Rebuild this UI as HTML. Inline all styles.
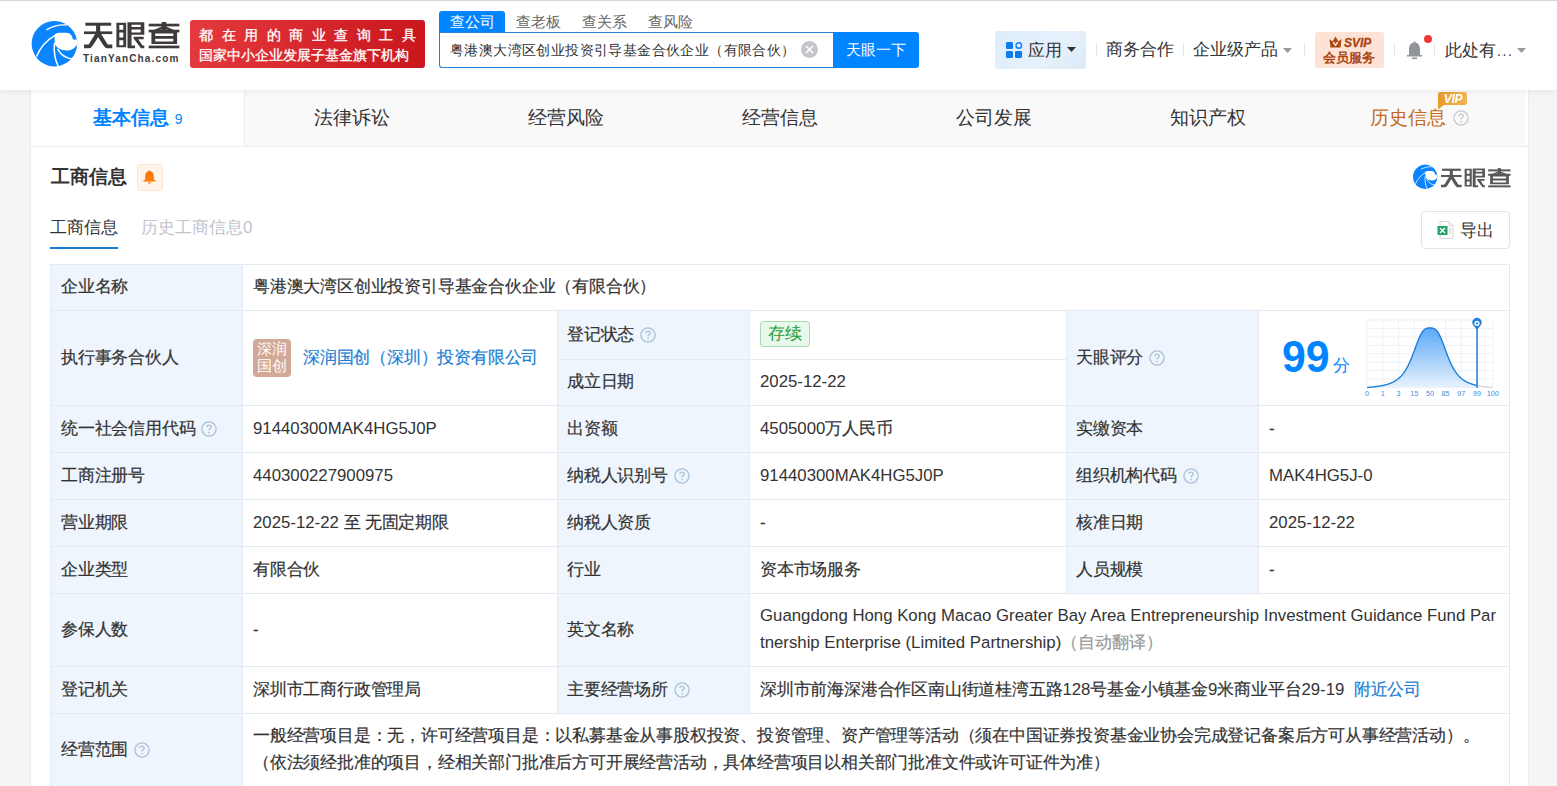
<!DOCTYPE html><html><head><meta charset="utf-8"><style>
*{margin:0;padding:0;box-sizing:border-box}
html,body{width:1557px;height:786px;overflow:hidden;background:#f5f5f5;font-family:"Liberation Sans",sans-serif;color:#333}
.abs{position:absolute;white-space:nowrap}
.hdr{position:absolute;left:0;top:0;width:1557px;height:90px;background:#fff;box-shadow:0 2px 6px rgba(0,0,0,.06);z-index:2}
.main{position:absolute;left:30px;top:90px;width:1499px;height:700px;background:#fff;border-left:1px solid #ececec;border-right:1px solid #ececec}
.tabs{position:absolute;left:0;top:0;width:1497px;height:57px;background:linear-gradient(90deg,#f9f9f9 1494px,#fff 1494px);border-bottom:1px solid #ececec}
.tab{position:absolute;top:0;height:56px;line-height:56px;text-align:center;font-size:19px;color:#333}
.cell{position:absolute;font-size:16.8px;color:#333;white-space:nowrap;letter-spacing:-0.2px;-webkit-text-stroke:0.2px currentColor}
.lt{letter-spacing:0;-webkit-text-stroke:0}
.lbl{position:absolute;background:#eef5fc}
.hl{position:absolute;height:1px;background:#e3eaf1}
.vl{position:absolute;width:1px;background:#e3eaf1}
.q{display:inline-block;width:15px;height:15px;border:1px solid #b8d0e6;border-radius:50%;font-size:11px;line-height:13px;text-align:center;color:#b8d0e6;vertical-align:middle;font-weight:normal}
</style></head><body>
<div class="hdr">
<div class="abs" style="left:0;top:0;width:1557px;height:1px;background:#d6d6d6"></div>
<svg class="abs" style="left:28px;top:18px" width="54" height="54" viewBox="0 0 54 54"><path d="M26.4 3 A22.7 22.7 0 1 1 26.39 3Z" fill="#0a84ff"/>
<path d="M26.8 16.5 C28 15.5 29.5 14.9 31 14.8 L38.5 14.8 C40.5 15 41.8 15.6 42.6 16.5 C44 17.8 44.6 19.5 44.8 21.5 L49.5 21.8 L49.5 24.2 C49 27 48.2 28.2 47.4 28.8 C45.8 30.8 44 31.6 42.6 31.9 C40.5 32.4 38.5 32.5 36.4 32.3 C34 32 32.4 31.4 30.9 30.6 C29.4 29.7 28.3 28.6 27.5 27.5 C26.6 25.5 26.4 22 26.8 16.5Z" fill="#fff"/>
<path d="M27.5 17.2 C19 22 12 30 8.6 38.5" stroke="#fff" stroke-width="1.5" fill="none"/>
<path d="M26.4 25 C25.6 34 27 42 30.5 49" stroke="#fff" stroke-width="1.5" fill="none"/>
<path d="M29.5 30.8 C33 37 38.5 40.5 45 41" stroke="#fff" stroke-width="1.5" fill="none"/>
<path d="M18.5 11.8 C24 8.5 32 6.5 39 7" stroke="#fff" stroke-width="1.4" fill="none"/></svg>
<svg class="abs" style="left:83.7px;top:22.4px;color:#3e3a3b" width="96" height="27" viewBox="0 0 96 27" fill="currentColor"><rect x="1.4" y="0.7" width="25.8" height="3"/><rect x="0" y="9.4" width="28.3" height="2.7"/><rect x="12.1" y="2" width="4.1" height="9"/>
<path d="M11.4 11.5H16.4L9 23.3Q7.3 26.3 4.5 26.3H0V22.6H3.6Q4.6 22.6 5.3 21.4Z"/>
<path d="M11.9 11.5H16.9L23 21.4Q23.7 22.6 24.7 22.6H28.3V26.3H23.8Q21 26.3 19.3 23.3Z"/>
<path d="M32.4 0.7H42.2V25.3H32.4ZM35.3 3V7.7H39.3V3ZM35.3 10.4V15.5H39.3V10.4ZM35.3 18.2V23.2H39.3V18.2Z" fill-rule="evenodd"/>
<path d="M43.5 0.3H60.3V12.8H47.5V23.6H51V26.3H43.5ZM47.5 2.7V5H56.7V2.7ZM47.5 7.4V10.4H56.7V7.4Z" fill-rule="evenodd"/>
<path d="M49.6 14.8H59.7V17.2H54.3L58.5 23.6H60.3V26.3H57L49.6 16.5Z"/>
<rect x="64.7" y="1.7" width="30.7" height="2.7"/><rect x="77.6" y="0" width="4.7" height="8.4"/>
<path d="M79.5 5.2L68.5 9.8M80.4 5.2L91.4 9.8" stroke="currentColor" stroke-width="2.4" fill="none"/>
<rect x="64.7" y="7.7" width="30.7" height="2.7"/>
<path d="M67.4 9.1H93.1V21.9H67.4ZM71.2 11.4V14.1H89.3V11.4ZM71.2 16.8V19.5H89.3V16.8Z" fill-rule="evenodd"/>
<rect x="64.7" y="23.6" width="30.7" height="2.7"/></svg>
<div class="abs" style="left:83px;top:53px;font-size:10px;line-height:12px;font-weight:bold;color:#3e3a3b;letter-spacing:1.15px">TianYanCha.com</div>
<div class="abs" style="left:190px;top:20px;width:235px;height:48px;border-radius:3px;background:linear-gradient(100deg,#e5393e,#c8161c)"></div>
<div class="abs" style="left:199px;top:25px;font-size:14px;color:#fff;letter-spacing:8.5px;line-height:20px;-webkit-text-stroke:0.3px #fff">都在用的商业查询工具</div>
<div class="abs" style="left:199px;top:44.5px;font-size:14.45px;color:#fff;line-height:20px;-webkit-text-stroke:0.3px #fff">国家中小企业发展子基金旗下机构</div>
<div class="abs" style="left:439px;top:11px;width:66px;height:22px;background:#0084ff;border-radius:3px 3px 0 0"></div>
<div class="abs" style="left:450px;top:12px;font-size:14.5px;line-height:20px;color:#fff">查公司</div>
<div class="abs" style="left:516px;top:12px;font-size:14.5px;line-height:20px;color:#666">查老板</div>
<div class="abs" style="left:582px;top:12px;font-size:14.5px;line-height:20px;color:#666">查关系</div>
<div class="abs" style="left:648px;top:12px;font-size:14.5px;line-height:20px;color:#666">查风险</div>
<div class="abs" style="left:439px;top:32px;width:395px;height:36px;border:1px solid #2a7fd8;border-right:none;border-radius:0 0 0 3px;background:#fff"></div>
<div class="abs" style="left:450px;top:40px;font-size:14px;letter-spacing:0.4px;line-height:20px;color:#333">粤港澳大湾区创业投资引导基金合伙企业（有限合伙）</div>
<div class="abs" style="left:801px;top:41px;width:17px;height:17px;border-radius:50%;background:#c4c6cc"></div>
<svg class="abs" style="left:801px;top:41px" width="17" height="17"><path d="M5 5L12 12M12 5L5 12" stroke="#fff" stroke-width="1.5"/></svg>
<div class="abs" style="left:833px;top:32px;width:86px;height:36px;background:#0084ff;border-radius:0 3px 3px 0"></div>
<div class="abs" style="left:846px;top:40px;font-size:14.7px;line-height:20px;color:#fff">天眼一下</div>
<div class="abs" style="left:995px;top:31px;width:91px;height:38px;border-radius:3px;background:linear-gradient(135deg,#deecfb,#e6f1fc 60%,#dde9f8)"></div>
<svg class="abs" style="left:1006px;top:42px" width="17" height="17" viewBox="0 0 17 17">
<rect x="0" y="0" width="7" height="7" rx="1.2" fill="#0a7cf0"/><circle cx="12.8" cy="3.5" r="2.8" fill="none" stroke="#0a7cf0" stroke-width="1.4"/>
<rect x="0" y="9" width="7" height="7" rx="1.2" fill="#0a7cf0"/><rect x="9" y="9" width="7" height="7" rx="1.2" fill="#0a7cf0"/></svg>
<div class="abs" style="left:1028px;top:40px;font-size:16.7px;line-height:22px;color:#333">应用</div>
<svg class="abs" style="left:1067px;top:47px" width="9" height="6"><path d="M0 0H9L4.5 5z" fill="#333"/></svg>
<div class="abs" style="left:1096px;top:43px;width:1px;height:14px;background:#e8e8e8"></div>
<div class="abs" style="left:1183px;top:43px;width:1px;height:14px;background:#e8e8e8"></div>
<div class="abs" style="left:1304px;top:43px;width:1px;height:14px;background:#e8e8e8"></div>
<div class="abs" style="left:1394px;top:43px;width:1px;height:14px;background:#e8e8e8"></div>
<div class="abs" style="left:1434px;top:43px;width:1px;height:14px;background:#e8e8e8"></div>
<div class="abs" style="left:1106px;top:39px;font-size:16.7px;line-height:22px;color:#333">商务合作</div>
<div class="abs" style="left:1193px;top:39px;font-size:16.7px;line-height:22px;color:#333">企业级产品</div>
<svg class="abs" style="left:1283px;top:48px" width="9" height="5"><path d="M0 0H9L4.5 5z" fill="#999"/></svg>
<div class="abs" style="left:1315px;top:32px;width:69px;height:36px;border-radius:3px;background:#fde3d5"></div>
<svg class="abs" style="left:1329px;top:36px" width="13" height="12" viewBox="0 0 13 12"><path d="M0.5 3L3.5 5.5L6.5 0.5L9.5 5.5L12.5 3L11.5 11.5H1.5Z" fill="#ac4612"/><path d="M4.2 6L6.5 9.2L8.8 6" stroke="#fde3d5" stroke-width="1.4" fill="none"/></svg>
<div class="abs" style="left:1344px;top:35.5px;font-size:12px;line-height:15px;font-weight:bold;font-style:italic;color:#ac4612;-webkit-text-stroke:0.3px #ac4612">SVIP</div>
<div class="abs" style="left:1323px;top:50px;font-size:12.8px;line-height:16px;font-weight:bold;color:#ac4612">会员服务</div>
<svg class="abs" style="left:1406px;top:41px" width="17" height="19" viewBox="0 0 17 19"><path d="M8.5 0.5C9.2 0.5 9.4 1 9.4 1.5C12.3 2.2 14 4.6 14 8V14H16V15.5H1V14H3V8C3 4.6 4.7 2.2 7.6 1.5C7.6 1 7.8 0.5 8.5 0.5Z" fill="#909399"/><rect x="6" y="16.5" width="5" height="1.6" fill="#909399"/></svg>
<div class="abs" style="left:1424px;top:35px;width:8px;height:8px;border-radius:50%;background:#f0373a"></div>
<div class="abs" style="left:1445px;top:40px;font-size:16.7px;line-height:22px;color:#333">此处有<span style="font-size:14px;letter-spacing:1.6px;margin-left:1px">...</span></div>
<svg class="abs" style="left:1517px;top:48px" width="9" height="5"><path d="M0 0H9L4.5 5z" fill="#999"/></svg>
</div>
<div class="main">
<div class="tabs"></div>
<div class="abs" style="left:0;top:0;width:214px;height:56px;background:#fff;border-right:1px solid #ececec"></div>
<div class="tab" style="left:0;width:214px;color:#0084ff;font-weight:bold">基本信息 <span style="font-size:14px;font-weight:normal">9</span></div>
<div class="tab" style="left:214px;width:214px">法律诉讼</div>
<div class="tab" style="left:428px;width:214px">经营风险</div>
<div class="tab" style="left:642px;width:214px">经营信息</div>
<div class="tab" style="left:856px;width:214px">公司发展</div>
<div class="tab" style="left:1070px;width:214px">知识产权</div>
<div class="abs" style="left:1339px;top:16px;font-size:19px;line-height:24px;color:#c4691c">历史信息</div>
<svg class="abs" style="left:1422px;top:20px" width="16" height="16" viewBox="0 0 16 16"><circle cx="8" cy="8" r="7.1" fill="none" stroke="#c6c9cf" stroke-width="1.3"/><path d="M5.9 6.1C5.9 4.9 6.8 4.1 8 4.1C9.2 4.1 10.1 4.9 10.1 6C10.1 7.3 8.3 7.5 8.1 9V9.6" fill="none" stroke="#c6c9cf" stroke-width="1.4"/><circle cx="8.1" cy="11.6" r="0.85" fill="#c6c9cf"/></svg>
<svg class="abs" style="left:1406px;top:2px" width="31" height="18" viewBox="0 0 31 18"><defs><linearGradient id="vg" x1="0" y1="0" x2="1" y2="0"><stop offset="0" stop-color="#e89a2c"/><stop offset="1" stop-color="#f0b555"/></linearGradient></defs><path d="M3 0H28Q30 0 30 2V11Q30 13 28 13H7L1 17.5V3Q1 0 3 0Z" fill="url(#vg)"/><text x="16" y="11.3" font-size="12" font-weight="bold" font-style="italic" fill="#fff" text-anchor="middle" font-family="Liberation Sans" letter-spacing="-0.3">VIP</text></svg>
</div>
<div class="abs" style="left:51px;top:164px;font-size:19px;line-height:26px;font-weight:bold;color:#333">工商信息</div>
<div class="abs" style="left:137px;top:164px;width:26px;height:27px;border:1px solid #fbe5d2;background:#fff4ea;border-radius:3px"></div>
<svg class="abs" style="left:143px;top:170px" width="13" height="14" viewBox="0 0 13 14"><path d="M6.5 0.3C7 0.3 7.2 0.7 7.2 1C9.5 1.5 10.8 3.4 10.8 6V10H12.5V11.5H0.5V10H2.2V6C2.2 3.4 3.5 1.5 5.8 1C5.8 0.7 6 0.3 6.5 0.3Z" fill="#ff7a00"/><path d="M4.8 12.3H8.2Q8 13.7 6.5 13.7Q5 13.7 4.8 12.3Z" fill="#ff7a00"/></svg>
<svg class="abs" style="left:1411px;top:163px" width="29" height="29" viewBox="0 0 54 54"><path d="M26.4 3 A22.7 22.7 0 1 1 26.39 3Z" fill="#0a84ff"/>
<path d="M26.8 16.5 C28 15.5 29.5 14.9 31 14.8 L38.5 14.8 C40.5 15 41.8 15.6 42.6 16.5 C44 17.8 44.6 19.5 44.8 21.5 L49.5 21.8 L49.5 24.2 C49 27 48.2 28.2 47.4 28.8 C45.8 30.8 44 31.6 42.6 31.9 C40.5 32.4 38.5 32.5 36.4 32.3 C34 32 32.4 31.4 30.9 30.6 C29.4 29.7 28.3 28.6 27.5 27.5 C26.6 25.5 26.4 22 26.8 16.5Z" fill="#fff"/>
<path d="M27.5 17.2 C19 22 12 30 8.6 38.5" stroke="#fff" stroke-width="1.5" fill="none"/>
<path d="M26.4 25 C25.6 34 27 42 30.5 49" stroke="#fff" stroke-width="1.5" fill="none"/>
<path d="M29.5 30.8 C33 37 38.5 40.5 45 41" stroke="#fff" stroke-width="1.5" fill="none"/>
<path d="M18.5 11.8 C24 8.5 32 6.5 39 7" stroke="#fff" stroke-width="1.4" fill="none"/></svg>
<svg class="abs" style="left:1440.7px;top:167.6px;color:#585858" width="70" height="20" viewBox="0 0 96 27" fill="currentColor"><rect x="1.4" y="0.7" width="25.8" height="3"/><rect x="0" y="9.4" width="28.3" height="2.7"/><rect x="12.1" y="2" width="4.1" height="9"/>
<path d="M11.4 11.5H16.4L9 23.3Q7.3 26.3 4.5 26.3H0V22.6H3.6Q4.6 22.6 5.3 21.4Z"/>
<path d="M11.9 11.5H16.9L23 21.4Q23.7 22.6 24.7 22.6H28.3V26.3H23.8Q21 26.3 19.3 23.3Z"/>
<path d="M32.4 0.7H42.2V25.3H32.4ZM35.3 3V7.7H39.3V3ZM35.3 10.4V15.5H39.3V10.4ZM35.3 18.2V23.2H39.3V18.2Z" fill-rule="evenodd"/>
<path d="M43.5 0.3H60.3V12.8H47.5V23.6H51V26.3H43.5ZM47.5 2.7V5H56.7V2.7ZM47.5 7.4V10.4H56.7V7.4Z" fill-rule="evenodd"/>
<path d="M49.6 14.8H59.7V17.2H54.3L58.5 23.6H60.3V26.3H57L49.6 16.5Z"/>
<rect x="64.7" y="1.7" width="30.7" height="2.7"/><rect x="77.6" y="0" width="4.7" height="8.4"/>
<path d="M79.5 5.2L68.5 9.8M80.4 5.2L91.4 9.8" stroke="currentColor" stroke-width="2.4" fill="none"/>
<rect x="64.7" y="7.7" width="30.7" height="2.7"/>
<path d="M67.4 9.1H93.1V21.9H67.4ZM71.2 11.4V14.1H89.3V11.4ZM71.2 16.8V19.5H89.3V16.8Z" fill-rule="evenodd"/>
<rect x="64.7" y="23.6" width="30.7" height="2.7"/></svg>
<div class="abs" style="left:50px;top:216px;font-size:17px;line-height:24px;color:#333">工商信息</div>
<div class="abs" style="left:141px;top:216px;font-size:17px;line-height:24px;color:#c0c4cc">历史工商信息0</div>
<div class="abs" style="left:50px;top:247px;width:68px;height:2px;background:#1a7fd4"></div>
<div class="abs" style="left:1421px;top:211px;width:89px;height:38px;border:1px solid #e3e3e3;border-radius:4px;background:#fff"></div>
<svg class="abs" style="left:1437px;top:221px" width="17" height="18" viewBox="0 0 17 18"><path d="M3 0.5H12L16 4.5V17.5H3Z" fill="#fff" stroke="#d6d6d6"/><path d="M12 0.5V4.5H16" fill="none" stroke="#d6d6d6"/><rect x="0.5" y="5" width="10" height="9" fill="#21a366"/><path d="M3 7L8 12M8 7L3 12" stroke="#fff" stroke-width="1.4"/><path d="M12 8H14.5M12 10H14.5M12 12H14.5" stroke="#d0d0d0"/></svg>
<div class="abs" style="left:1460px;top:219px;font-size:17px;line-height:24px;color:#333">导出</div>
<div class="abs" style="left:50px;top:264px;width:1459px;height:540px;background:#fff"></div>
<div class="lbl" style="left:50px;top:264px;width:192px;height:536px"></div>
<div class="lbl" style="left:557px;top:310px;width:192px;height:403px"></div>
<div class="lbl" style="left:1066px;top:310px;width:192px;height:283px"></div>
<div class="hl" style="left:50px;top:264px;width:1460px"></div>
<div class="hl" style="left:50px;top:310px;width:1460px"></div>
<div class="hl" style="left:50px;top:405px;width:1460px"></div>
<div class="hl" style="left:50px;top:452px;width:1460px"></div>
<div class="hl" style="left:50px;top:499px;width:1460px"></div>
<div class="hl" style="left:50px;top:546px;width:1460px"></div>
<div class="hl" style="left:50px;top:593px;width:1460px"></div>
<div class="hl" style="left:50px;top:666px;width:1460px"></div>
<div class="hl" style="left:50px;top:713px;width:1460px"></div>
<div class="hl" style="left:557px;top:359px;width:510px"></div>
<div class="vl" style="left:50px;top:264px;height:536px"></div>
<div class="vl" style="left:242px;top:264px;height:536px"></div>
<div class="vl" style="left:1509px;top:264px;height:536px"></div>
<div class="vl" style="left:557px;top:310px;height:403px"></div>
<div class="vl" style="left:749px;top:310px;height:403px"></div>
<div class="vl" style="left:1066px;top:310px;height:283px"></div>
<div class="vl" style="left:1258px;top:310px;height:283px"></div>
<div class="cell" style="left:61px;top:264px;height:46px;line-height:46px;">企业名称</div>
<div class="cell" style="left:253px;top:264px;height:46px;line-height:46px;">粤港澳大湾区创业投资引导基金合伙企业（有限合伙）</div>
<div class="cell" style="left:61px;top:310px;height:95px;line-height:95px;">执行事务合伙人</div>
<div class="abs" style="left:253px;top:339px;width:38px;height:38px;border-radius:4px;background:#d2a896;color:#fff;font-size:14.5px;line-height:16.5px;text-align:center;padding-top:2px;white-space:normal">深润<br>国创</div>
<div class="cell" style="left:303px;top:310px;height:95px;line-height:95px;color:#1a7fd4">深润国创（深圳）投资有限公司</div>
<div class="cell" style="left:567px;top:310px;height:49px;line-height:49px;">登记状态<svg style="margin-left:6px;vertical-align:middle;position:relative;top:-1px" width="16" height="16" viewBox="0 0 16 16"><circle cx="8" cy="8" r="7.1" fill="none" stroke="#abc1d7" stroke-width="1.3"/><path d="M5.9 6.1C5.9 4.9 6.8 4.1 8 4.1C9.2 4.1 10.1 4.9 10.1 6C10.1 7.3 8.3 7.5 8.1 9V9.6" fill="none" stroke="#abc1d7" stroke-width="1.4"/><circle cx="8.1" cy="11.6" r="0.85" fill="#abc1d7"/></svg></div>
<div class="abs" style="left:760px;top:321px;width:50px;height:26px;border:1px solid #a6dcb0;background:#e8f8ea;border-radius:3px;color:#1e9c3c;font-size:17px;line-height:24px;text-align:center">存续</div>
<div class="cell" style="left:567px;top:359px;height:46px;line-height:46px;">成立日期</div>
<div class="cell" style="left:760px;top:359px;height:46px;line-height:46px;"><span class="lt">2025-12-22</span></div>
<div class="cell" style="left:1076px;top:310px;height:95px;line-height:95px;">天眼评分<svg style="margin-left:6px;vertical-align:middle;position:relative;top:-1px" width="16" height="16" viewBox="0 0 16 16"><circle cx="8" cy="8" r="7.1" fill="none" stroke="#abc1d7" stroke-width="1.3"/><path d="M5.9 6.1C5.9 4.9 6.8 4.1 8 4.1C9.2 4.1 10.1 4.9 10.1 6C10.1 7.3 8.3 7.5 8.1 9V9.6" fill="none" stroke="#abc1d7" stroke-width="1.4"/><circle cx="8.1" cy="11.6" r="0.85" fill="#abc1d7"/></svg></div>
<div class="abs" style="left:1281.5px;top:330.5px;font-size:45px;line-height:52px;font-weight:bold;color:#0084ff;transform:scaleX(0.95);transform-origin:0 0">99</div>
<div class="abs" style="left:1333px;top:354px;font-size:17px;line-height:24px;color:#0084ff">分</div>
<svg class="abs" style="left:1357px;top:312px" width="145" height="90" viewBox="0 0 145 90">
<defs><linearGradient id="g" x1="0" y1="0" x2="0" y2="1"><stop offset="0" stop-color="#5aa9f7"/><stop offset="1" stop-color="#e8f2fd"/></linearGradient></defs>
<path d="M10.00 8V75.5" stroke="#edf2f8" stroke-width="1"/><path d="M25.73 8V75.5" stroke="#edf2f8" stroke-width="1"/><path d="M41.45 8V75.5" stroke="#edf2f8" stroke-width="1"/><path d="M57.17 8V75.5" stroke="#edf2f8" stroke-width="1"/><path d="M72.90 8V75.5" stroke="#edf2f8" stroke-width="1"/><path d="M88.62 8V75.5" stroke="#edf2f8" stroke-width="1"/><path d="M104.35 8V75.5" stroke="#edf2f8" stroke-width="1"/><path d="M120.08 8V75.5" stroke="#edf2f8" stroke-width="1"/><path d="M135.80 8V75.5" stroke="#edf2f8" stroke-width="1"/><path d="M10 8.00H135.8" stroke="#edf2f8" stroke-width="1"/><path d="M10 16.44H135.8" stroke="#edf2f8" stroke-width="1"/><path d="M10 24.88H135.8" stroke="#edf2f8" stroke-width="1"/><path d="M10 33.32H135.8" stroke="#edf2f8" stroke-width="1"/><path d="M10 41.76H135.8" stroke="#edf2f8" stroke-width="1"/><path d="M10 50.20H135.8" stroke="#edf2f8" stroke-width="1"/><path d="M10 58.64H135.8" stroke="#edf2f8" stroke-width="1"/><path d="M10 67.08H135.8" stroke="#edf2f8" stroke-width="1"/><path d="M10 75.52H135.8" stroke="#edf2f8" stroke-width="1"/>
<path d="M10.0 75.50 L10.5 75.46 L11.0 75.43 L11.5 75.39 L12.0 75.35 L12.5 75.30 L13.0 75.26 L13.5 75.22 L14.0 75.17 L14.5 75.12 L15.0 75.08 L15.5 75.03 L16.0 74.97 L16.5 74.92 L17.0 74.86 L17.5 74.81 L18.0 74.75 L18.5 74.69 L19.0 74.62 L19.5 74.56 L20.0 74.49 L20.5 74.42 L21.0 74.34 L21.5 74.27 L22.0 74.19 L22.5 74.11 L23.0 74.02 L23.5 73.93 L24.0 73.84 L24.5 73.75 L25.0 73.65 L25.5 73.54 L26.0 73.44 L26.5 73.33 L27.0 73.21 L27.5 73.09 L28.0 72.97 L28.5 72.84 L29.0 72.70 L29.5 72.56 L30.0 72.42 L30.5 72.26 L31.0 72.10 L31.5 71.94 L32.0 71.77 L32.5 71.58 L33.0 71.40 L33.5 71.20 L34.0 70.99 L34.5 70.78 L35.0 70.55 L35.5 70.32 L36.0 70.08 L36.5 69.82 L37.0 69.55 L37.5 69.27 L38.0 68.98 L38.5 68.67 L39.0 68.35 L39.5 68.01 L40.0 67.66 L40.5 67.29 L41.0 66.90 L41.5 66.49 L42.0 66.07 L42.5 65.62 L43.0 65.15 L43.5 64.66 L44.0 64.15 L44.5 63.61 L45.0 63.04 L45.5 62.45 L46.0 61.83 L46.5 61.18 L47.0 60.50 L47.5 59.79 L48.0 59.04 L48.5 58.26 L49.0 57.45 L49.5 56.60 L50.0 55.71 L50.5 54.79 L51.0 53.83 L51.5 52.83 L52.0 51.79 L52.5 50.71 L53.0 49.60 L53.5 48.44 L54.0 47.26 L54.5 46.04 L55.0 44.78 L55.5 43.50 L56.0 42.19 L56.5 40.86 L57.0 39.51 L57.5 38.15 L58.0 36.78 L58.5 35.41 L59.0 34.05 L59.5 32.69 L60.0 31.35 L60.5 30.04 L61.0 28.76 L61.5 27.52 L62.0 26.33 L62.5 25.18 L63.0 24.10 L63.5 23.08 L64.0 22.12 L64.5 21.24 L65.0 20.43 L65.5 19.70 L66.0 19.04 L66.5 18.46 L67.0 17.95 L67.5 17.51 L68.0 17.15 L68.5 16.84 L69.0 16.59 L69.5 16.40 L70.0 16.25 L70.5 16.15 L71.0 16.07 L71.5 16.03 L72.0 16.01 L72.5 16.00 L73.0 16.00 L73.5 16.00 L74.0 16.01 L74.5 16.03 L75.0 16.07 L75.5 16.15 L76.0 16.25 L76.5 16.40 L77.0 16.59 L77.5 16.84 L78.0 17.15 L78.5 17.51 L79.0 17.95 L79.5 18.46 L80.0 19.04 L80.5 19.70 L81.0 20.43 L81.5 21.24 L82.0 22.12 L82.5 23.08 L83.0 24.10 L83.5 25.18 L84.0 26.33 L84.5 27.52 L85.0 28.76 L85.5 30.04 L86.0 31.35 L86.5 32.69 L87.0 34.05 L87.5 35.41 L88.0 36.78 L88.5 38.15 L89.0 39.51 L89.5 40.86 L90.0 42.19 L90.5 43.50 L91.0 44.78 L91.5 46.04 L92.0 47.26 L92.5 48.44 L93.0 49.60 L93.5 50.71 L94.0 51.79 L94.5 52.83 L95.0 53.83 L95.5 54.79 L96.0 55.71 L96.5 56.60 L97.0 57.45 L97.5 58.26 L98.0 59.04 L98.5 59.79 L99.0 60.50 L99.5 61.18 L100.0 61.83 L100.5 62.45 L101.0 63.04 L101.5 63.61 L102.0 64.15 L102.5 64.66 L103.0 65.15 L103.5 65.62 L104.0 66.07 L104.5 66.49 L105.0 66.90 L105.5 67.29 L106.0 67.66 L106.5 68.01 L107.0 68.35 L107.5 68.67 L108.0 68.98 L108.5 69.27 L109.0 69.55 L109.5 69.82 L110.0 70.08 L110.5 70.32 L111.0 70.55 L111.5 70.78 L112.0 70.99 L112.5 71.20 L113.0 71.40 L113.5 71.58 L114.0 71.77 L114.5 71.94 L115.0 72.10 L115.5 72.26 L116.0 72.42 L116.5 72.56 L117.0 72.70 L117.5 72.84 L118.0 72.97 L118.5 73.09 L119.0 73.21 L119.5 73.33 L120.0 73.44 L120 75.5 L10 75.5 Z" fill="url(#g)"/>
<path d="M120.0 73.44 L120.5 73.54 L121.0 73.65 L121.5 73.75 L122.0 73.84 L122.5 73.93 L123.0 74.02 L123.5 74.11 L124.0 74.19 L124.5 74.27 L125.0 74.34 L125.5 74.42 L126.0 74.49 L126.5 74.56 L127.0 74.62 L127.5 74.69 L128.0 74.75 L128.5 74.81 L129.0 74.86 L129.5 74.92 L130.0 74.97 L130.5 75.03 L131.0 75.08 L131.5 75.12 L132.0 75.17 L132.5 75.22 L133.0 75.26 L133.5 75.30 L134.0 75.35 L134.5 75.39 L135.0 75.43 L135.5 75.46 L136.0 75.50" stroke="#d4d4d4" stroke-width="1.2" fill="none"/>
<path d="M10.0 75.50 L10.5 75.46 L11.0 75.43 L11.5 75.39 L12.0 75.35 L12.5 75.30 L13.0 75.26 L13.5 75.22 L14.0 75.17 L14.5 75.12 L15.0 75.08 L15.5 75.03 L16.0 74.97 L16.5 74.92 L17.0 74.86 L17.5 74.81 L18.0 74.75 L18.5 74.69 L19.0 74.62 L19.5 74.56 L20.0 74.49 L20.5 74.42 L21.0 74.34 L21.5 74.27 L22.0 74.19 L22.5 74.11 L23.0 74.02 L23.5 73.93 L24.0 73.84 L24.5 73.75 L25.0 73.65 L25.5 73.54 L26.0 73.44 L26.5 73.33 L27.0 73.21 L27.5 73.09 L28.0 72.97 L28.5 72.84 L29.0 72.70 L29.5 72.56 L30.0 72.42 L30.5 72.26 L31.0 72.10 L31.5 71.94 L32.0 71.77 L32.5 71.58 L33.0 71.40 L33.5 71.20 L34.0 70.99 L34.5 70.78 L35.0 70.55 L35.5 70.32 L36.0 70.08 L36.5 69.82 L37.0 69.55 L37.5 69.27 L38.0 68.98 L38.5 68.67 L39.0 68.35 L39.5 68.01 L40.0 67.66 L40.5 67.29 L41.0 66.90 L41.5 66.49 L42.0 66.07 L42.5 65.62 L43.0 65.15 L43.5 64.66 L44.0 64.15 L44.5 63.61 L45.0 63.04 L45.5 62.45 L46.0 61.83 L46.5 61.18 L47.0 60.50 L47.5 59.79 L48.0 59.04 L48.5 58.26 L49.0 57.45 L49.5 56.60 L50.0 55.71 L50.5 54.79 L51.0 53.83 L51.5 52.83 L52.0 51.79 L52.5 50.71 L53.0 49.60 L53.5 48.44 L54.0 47.26 L54.5 46.04 L55.0 44.78 L55.5 43.50 L56.0 42.19 L56.5 40.86 L57.0 39.51 L57.5 38.15 L58.0 36.78 L58.5 35.41 L59.0 34.05 L59.5 32.69 L60.0 31.35 L60.5 30.04 L61.0 28.76 L61.5 27.52 L62.0 26.33 L62.5 25.18 L63.0 24.10 L63.5 23.08 L64.0 22.12 L64.5 21.24 L65.0 20.43 L65.5 19.70 L66.0 19.04 L66.5 18.46 L67.0 17.95 L67.5 17.51 L68.0 17.15 L68.5 16.84 L69.0 16.59 L69.5 16.40 L70.0 16.25 L70.5 16.15 L71.0 16.07 L71.5 16.03 L72.0 16.01 L72.5 16.00 L73.0 16.00 L73.5 16.00 L74.0 16.01 L74.5 16.03 L75.0 16.07 L75.5 16.15 L76.0 16.25 L76.5 16.40 L77.0 16.59 L77.5 16.84 L78.0 17.15 L78.5 17.51 L79.0 17.95 L79.5 18.46 L80.0 19.04 L80.5 19.70 L81.0 20.43 L81.5 21.24 L82.0 22.12 L82.5 23.08 L83.0 24.10 L83.5 25.18 L84.0 26.33 L84.5 27.52 L85.0 28.76 L85.5 30.04 L86.0 31.35 L86.5 32.69 L87.0 34.05 L87.5 35.41 L88.0 36.78 L88.5 38.15 L89.0 39.51 L89.5 40.86 L90.0 42.19 L90.5 43.50 L91.0 44.78 L91.5 46.04 L92.0 47.26 L92.5 48.44 L93.0 49.60 L93.5 50.71 L94.0 51.79 L94.5 52.83 L95.0 53.83 L95.5 54.79 L96.0 55.71 L96.5 56.60 L97.0 57.45 L97.5 58.26 L98.0 59.04 L98.5 59.79 L99.0 60.50 L99.5 61.18 L100.0 61.83 L100.5 62.45 L101.0 63.04 L101.5 63.61 L102.0 64.15 L102.5 64.66 L103.0 65.15 L103.5 65.62 L104.0 66.07 L104.5 66.49 L105.0 66.90 L105.5 67.29 L106.0 67.66 L106.5 68.01 L107.0 68.35 L107.5 68.67 L108.0 68.98 L108.5 69.27 L109.0 69.55 L109.5 69.82 L110.0 70.08 L110.5 70.32 L111.0 70.55 L111.5 70.78 L112.0 70.99 L112.5 71.20 L113.0 71.40 L113.5 71.58 L114.0 71.77 L114.5 71.94 L115.0 72.10 L115.5 72.26 L116.0 72.42 L116.5 72.56 L117.0 72.70 L117.5 72.84 L118.0 72.97 L118.5 73.09 L119.0 73.21 L119.5 73.33 L120.0 73.44" stroke="#1f7fdc" stroke-width="1.4" fill="none"/>
<path d="M120 13V76" stroke="#1f7fdc" stroke-width="1.5"/>
<path d="M116.3 13.2 A4.6 4.6 0 1 1 123.7 13.2 L120 17.8Z" fill="#1f7fdc"/>
<circle cx="120" cy="11.3" r="2.6" fill="#fff"/><circle cx="120" cy="11.3" r="1.1" fill="#1f7fdc"/>
<text x="10.0" y="84.3" font-size="7.2" fill="#3a8fe0" text-anchor="middle" font-family="Liberation Sans">0</text><text x="25.7" y="84.3" font-size="7.2" fill="#3a8fe0" text-anchor="middle" font-family="Liberation Sans">1</text><text x="41.5" y="84.3" font-size="7.2" fill="#3a8fe0" text-anchor="middle" font-family="Liberation Sans">3</text><text x="57.2" y="84.3" font-size="7.2" fill="#3a8fe0" text-anchor="middle" font-family="Liberation Sans">15</text><text x="72.9" y="84.3" font-size="7.2" fill="#3a8fe0" text-anchor="middle" font-family="Liberation Sans">50</text><text x="88.6" y="84.3" font-size="7.2" fill="#3a8fe0" text-anchor="middle" font-family="Liberation Sans">85</text><text x="104.3" y="84.3" font-size="7.2" fill="#3a8fe0" text-anchor="middle" font-family="Liberation Sans">97</text><text x="120.1" y="84.3" font-size="7.2" fill="#3a8fe0" text-anchor="middle" font-family="Liberation Sans">99</text><text x="135.8" y="84.3" font-size="7.2" fill="#3a8fe0" text-anchor="middle" font-family="Liberation Sans">100</text></svg>
<div class="cell" style="left:61px;top:405px;height:47px;line-height:47px;">统一社会信用代码<svg style="margin-left:6px;vertical-align:middle;position:relative;top:-1px" width="16" height="16" viewBox="0 0 16 16"><circle cx="8" cy="8" r="7.1" fill="none" stroke="#abc1d7" stroke-width="1.3"/><path d="M5.9 6.1C5.9 4.9 6.8 4.1 8 4.1C9.2 4.1 10.1 4.9 10.1 6C10.1 7.3 8.3 7.5 8.1 9V9.6" fill="none" stroke="#abc1d7" stroke-width="1.4"/><circle cx="8.1" cy="11.6" r="0.85" fill="#abc1d7"/></svg></div>
<div class="cell" style="left:253px;top:405px;height:47px;line-height:47px;"><span class="lt">91440300MAK4HG5J0P</span></div>
<div class="cell" style="left:567px;top:405px;height:47px;line-height:47px;">出资额</div>
<div class="cell" style="left:760px;top:405px;height:47px;line-height:47px;"><span class="lt">4505000</span>万人民币</div>
<div class="cell" style="left:1076px;top:405px;height:47px;line-height:47px;">实缴资本</div>
<div class="cell" style="left:1269px;top:405px;height:47px;line-height:47px;">-</div>
<div class="cell" style="left:61px;top:452px;height:47px;line-height:47px;">工商注册号</div>
<div class="cell" style="left:253px;top:452px;height:47px;line-height:47px;"><span class="lt">440300227900975</span></div>
<div class="cell" style="left:567px;top:452px;height:47px;line-height:47px;">纳税人识别号<svg style="margin-left:6px;vertical-align:middle;position:relative;top:-1px" width="16" height="16" viewBox="0 0 16 16"><circle cx="8" cy="8" r="7.1" fill="none" stroke="#abc1d7" stroke-width="1.3"/><path d="M5.9 6.1C5.9 4.9 6.8 4.1 8 4.1C9.2 4.1 10.1 4.9 10.1 6C10.1 7.3 8.3 7.5 8.1 9V9.6" fill="none" stroke="#abc1d7" stroke-width="1.4"/><circle cx="8.1" cy="11.6" r="0.85" fill="#abc1d7"/></svg></div>
<div class="cell" style="left:760px;top:452px;height:47px;line-height:47px;"><span class="lt">91440300MAK4HG5J0P</span></div>
<div class="cell" style="left:1076px;top:452px;height:47px;line-height:47px;">组织机构代码<svg style="margin-left:6px;vertical-align:middle;position:relative;top:-1px" width="16" height="16" viewBox="0 0 16 16"><circle cx="8" cy="8" r="7.1" fill="none" stroke="#abc1d7" stroke-width="1.3"/><path d="M5.9 6.1C5.9 4.9 6.8 4.1 8 4.1C9.2 4.1 10.1 4.9 10.1 6C10.1 7.3 8.3 7.5 8.1 9V9.6" fill="none" stroke="#abc1d7" stroke-width="1.4"/><circle cx="8.1" cy="11.6" r="0.85" fill="#abc1d7"/></svg></div>
<div class="cell" style="left:1269px;top:452px;height:47px;line-height:47px;"><span class="lt">MAK4HG5J-0</span></div>
<div class="cell" style="left:61px;top:499px;height:47px;line-height:47px;">营业期限</div>
<div class="cell" style="left:253px;top:499px;height:47px;line-height:47px;"><span class="lt">2025-12-22 </span>至 无固定期限</div>
<div class="cell" style="left:567px;top:499px;height:47px;line-height:47px;">纳税人资质</div>
<div class="cell" style="left:760px;top:499px;height:47px;line-height:47px;">-</div>
<div class="cell" style="left:1076px;top:499px;height:47px;line-height:47px;">核准日期</div>
<div class="cell" style="left:1269px;top:499px;height:47px;line-height:47px;"><span class="lt">2025-12-22</span></div>
<div class="cell" style="left:61px;top:546px;height:47px;line-height:47px;">企业类型</div>
<div class="cell" style="left:253px;top:546px;height:47px;line-height:47px;">有限合伙</div>
<div class="cell" style="left:567px;top:546px;height:47px;line-height:47px;">行业</div>
<div class="cell" style="left:760px;top:546px;height:47px;line-height:47px;">资本市场服务</div>
<div class="cell" style="left:1076px;top:546px;height:47px;line-height:47px;">人员规模</div>
<div class="cell" style="left:1269px;top:546px;height:47px;line-height:47px;">-</div>
<div class="cell" style="left:61px;top:593px;height:73px;line-height:73px;">参保人数</div>
<div class="cell" style="left:253px;top:593px;height:73px;line-height:73px;">-</div>
<div class="cell" style="left:567px;top:593px;height:73px;line-height:73px;">英文名称</div>
<div class="cell" style="left:760px;top:602px;line-height:27px;letter-spacing:0;-webkit-text-stroke:0">Guangdong Hong Kong Macao Greater Bay Area Entrepreneurship Investment Guidance Fund Par<br>tnership Enterprise (Limited Partnership)<span style="color:#999;-webkit-text-stroke:0.2px #999">（自动翻译）</span></div>
<div class="cell" style="left:61px;top:666px;height:47px;line-height:47px;">登记机关</div>
<div class="cell" style="left:253px;top:666px;height:47px;line-height:47px;">深圳市工商行政管理局</div>
<div class="cell" style="left:567px;top:666px;height:47px;line-height:47px;">主要经营场所<svg style="margin-left:6px;vertical-align:middle;position:relative;top:-1px" width="16" height="16" viewBox="0 0 16 16"><circle cx="8" cy="8" r="7.1" fill="none" stroke="#abc1d7" stroke-width="1.3"/><path d="M5.9 6.1C5.9 4.9 6.8 4.1 8 4.1C9.2 4.1 10.1 4.9 10.1 6C10.1 7.3 8.3 7.5 8.1 9V9.6" fill="none" stroke="#abc1d7" stroke-width="1.4"/><circle cx="8.1" cy="11.6" r="0.85" fill="#abc1d7"/></svg></div>
<div class="cell" style="left:760px;top:666px;height:47px;line-height:47px;">深圳市前海深港合作区南山街道桂湾五路<span class="lt">128</span>号基金小镇基金<span class="lt">9</span>米商业平台<span class="lt">29-19</span> <span style="color:#1a7fd4;margin-left:5px">附近公司</span></div>
<div class="cell" style="left:61px;top:713px;height:73px;line-height:73px;">经营范围<svg style="margin-left:6px;vertical-align:middle;position:relative;top:-1px" width="16" height="16" viewBox="0 0 16 16"><circle cx="8" cy="8" r="7.1" fill="none" stroke="#abc1d7" stroke-width="1.3"/><path d="M5.9 6.1C5.9 4.9 6.8 4.1 8 4.1C9.2 4.1 10.1 4.9 10.1 6C10.1 7.3 8.3 7.5 8.1 9V9.6" fill="none" stroke="#abc1d7" stroke-width="1.4"/><circle cx="8.1" cy="11.6" r="0.85" fill="#abc1d7"/></svg></div>
<div class="cell" style="left:253px;top:722px;line-height:27px">一般经营项目是：无，许可经营项目是：以私募基金从事股权投资、投资管理、资产管理等活动（须在中国证券投资基金业协会完成登记备案后方可从事经营活动）。<br>（依法须经批准的项目，经相关部门批准后方可开展经营活动，具体经营项目以相关部门批准文件或许可证件为准）</div>
</body></html>
